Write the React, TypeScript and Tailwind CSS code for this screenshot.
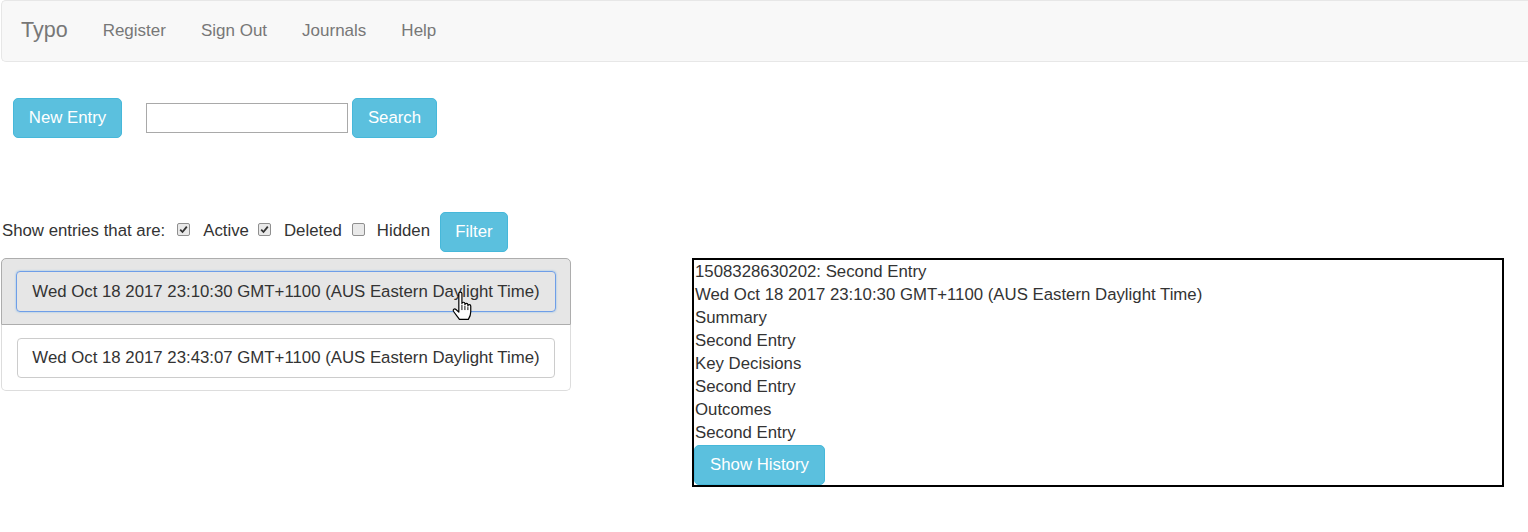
import React from "react";

function Check({ checked }: { checked: boolean }) {
  return (
    <span className="inline-flex items-center justify-center w-[13px] h-[13px] border border-[#8f8f8f] bg-[#e9e9e9] rounded-[2px] shrink-0">
      {checked && (
        <svg width="9" height="9" viewBox="0 0 9 9">
          <path d="M1.2 4.6 L3.5 7 L7.8 1.6" fill="none" stroke="#333" strokeWidth="1.8" />
        </svg>
      )}
    </span>
  );
}

function Hand() {
  return (
    <svg width="24" height="31" viewBox="0 0 20 26" className="absolute left-[449px] top-[32px]">
      <path
        d="M6.5 2.2 c0-1.6 2.6-1.6 2.6 0 v8.3 c0-1.4 2.5-1.4 2.5 0 v1 c0-1.4 2.5-1.4 2.5 0 v1 c0-1.4 2.4-1.4 2.4 0 v5 c0 2.8-0.8 4.5-2 6.3 h-7.5 c-1.3-2-3.6-4.6-5-6.8 c-0.8-1.4 0.9-2.6 2.1-1.5 l2.4 2.2 z"
        fill="#fff"
        stroke="#000"
        strokeWidth="1"
        strokeLinejoin="round"
      />
      <path d="M9.1 11.5 v4.5 M11.6 12.5 v3.5 M14.1 13.5 v2.5" stroke="#000" strokeWidth="0.8" />
    </svg>
  );
}

export default function App() {
  const font = { fontFamily: '"Liberation Sans", Arial, sans-serif' };
  const lines = [
    "1508328630202: Second Entry",
    "Wed Oct 18 2017 23:10:30 GMT+1100 (AUS Eastern Daylight Time)",
    "Summary",
    "Second Entry",
    "Key Decisions",
    "Second Entry",
    "Outcomes",
    "Second Entry",
  ];
  return (
    <div className="w-[1528px] h-[532px] overflow-hidden bg-white text-[#333] text-[16.8px]" style={font}>
      {/* navbar */}
      <div className="ml-[1px] h-[62px] bg-[#f8f8f8] border border-r-0 border-[#e7e7e7] rounded-l-[5px] flex items-center">
        <span className="ml-[19px] text-[21.5px] text-[#777] leading-none">Typo</span>
        <div className="flex items-center ml-[35px] gap-[35px] text-[#777] text-[17px]">
          <span>Register</span>
          <span>Sign Out</span>
          <span>Journals</span>
          <span>Help</span>
        </div>
      </div>

      {/* new entry / search */}
      <div className="flex items-center mt-[36px] ml-[13px]">
        <button className="w-[109px] h-[40px] bg-[#5bc0de] border border-[#46b8da] rounded-[5px] text-white">
          New Entry
        </button>
        <input className="ml-[24px] w-[202px] h-[30px] border border-[#a9a9a9] bg-white outline-none" />
        <button className="ml-[4px] w-[85px] h-[40px] bg-[#5bc0de] border border-[#46b8da] rounded-[5px] text-white">
          Search
        </button>
      </div>

      {/* filter row */}
      <div className="flex items-center mt-[74px] ml-[2px] h-[40px]">
        <span className="-mt-[2px]">Show entries that are:</span>
        <span className="ml-[12px] mt-[-5px] flex"><Check checked /></span>
        <span className="ml-[13px] -mt-[2px]">Active</span>
        <span className="ml-[9px] mt-[-5px] flex"><Check checked /></span>
        <span className="ml-[13px] -mt-[2px]">Deleted</span>
        <span className="ml-[10px] mt-[-5px] flex"><Check checked={false} /></span>
        <span className="ml-[12px] -mt-[2px]">Hidden</span>
        <button className="ml-[10px] w-[68px] h-[40px] bg-[#5bc0de] border border-[#46b8da] rounded-[5px] text-white">
          Filter
        </button>
      </div>

      {/* main area */}
      <div className="flex items-start mt-[6px]">
        <div className="ml-[1px] w-[570px]">
          <div className="relative h-[67px] bg-[#e6e6e6] border border-[#adadad] rounded-t-[5px] px-[14px] pt-[12px]">
            <div className="h-[41px] border border-[#6f9ee8] rounded-[4px] shadow-[0_0_2px_rgba(102,175,233,0.8)] flex items-center justify-center">
              Wed Oct 18 2017 23:10:30 GMT+1100 (AUS Eastern Daylight Time)
            </div>
            <Hand />
          </div>
          <div className="h-[66px] bg-white border border-t-0 border-[#dddddd] rounded-b-[5px] px-[15px] pt-[13px]">
            <div className="h-[40px] border border-[#cccccc] rounded-[4px] flex items-center justify-center">
              Wed Oct 18 2017 23:43:07 GMT+1100 (AUS Eastern Daylight Time)
            </div>
          </div>
        </div>

        <div className="ml-[121px] w-[812px] h-[229px] border-2 border-black flex flex-col">
          <div className="leading-[23px] pl-[1px]">
            {lines.map((l, i) => (
              <div key={i}>{l}</div>
            ))}
          </div>
          <button className="mt-[1px] w-[131px] h-[40px] bg-[#5bc0de] border border-[#46b8da] rounded-[5px] text-white">
            Show History
          </button>
        </div>
      </div>
    </div>
  );
}
